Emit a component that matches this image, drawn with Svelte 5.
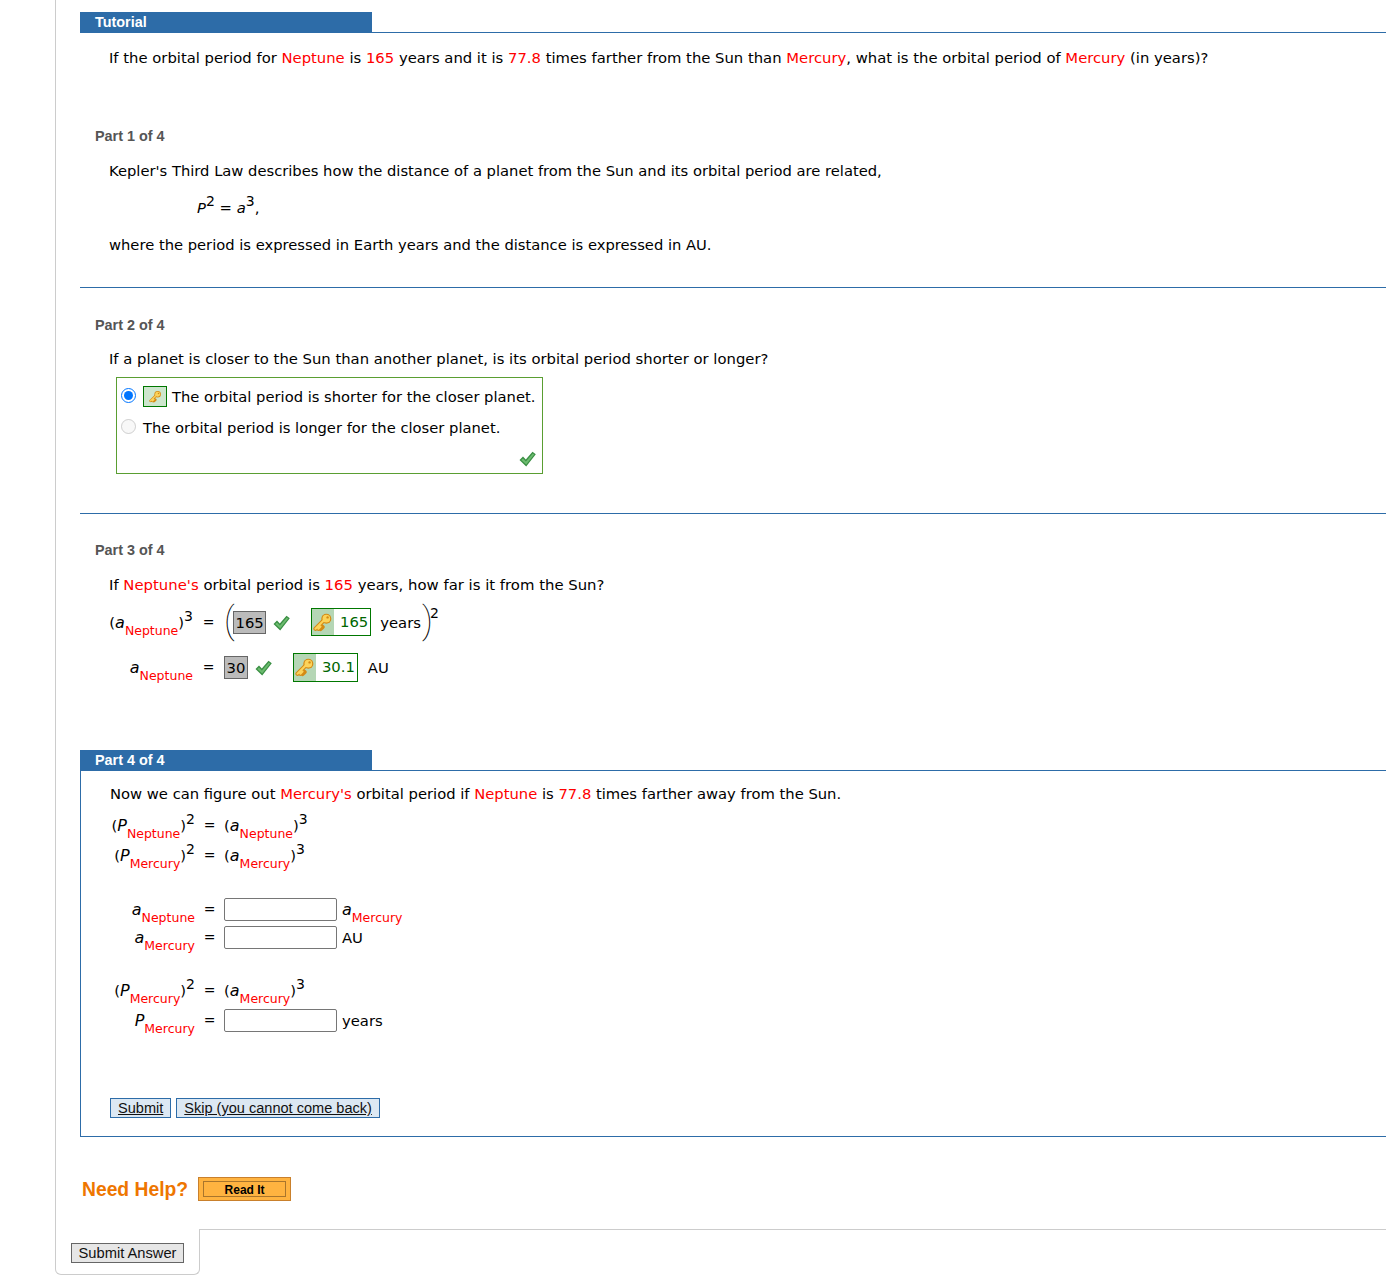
<script lang="ts">
	const intro = [
		['If the orbital period for ', false],
		['Neptune', true],
		[' is ', false],
		['165', true],
		[' years and it is ', false],
		['77.8', true],
		[' times farther from the Sun than ', false],
		['Mercury', true],
		[', what is the orbital period of ', false],
		['Mercury', true],
		[' (in years)?', false]
	];
</script>

{#snippet key()}
	<svg class="key" viewBox="0 0 24 24" aria-hidden="true">
		<path d="M3 20 L14 9 M6.5 20 L9 17.5 M9 20.5 L11.5 18" fill="none" stroke="#d48a14" stroke-width="5" stroke-linecap="round" />
		<circle cx="16" cy="8" r="6" fill="#d48a14" />
		<path d="M3 20 L14 9 M6.5 20 L9 17.5" fill="none" stroke="#fbd35a" stroke-width="2.6" stroke-linecap="round" />
		<circle cx="16" cy="8" r="4.6" fill="#fbd35a" />
		<circle cx="17.5" cy="6.5" r="1.4" fill="#d48a14" />
	</svg>
{/snippet}

{#snippet check()}
	<svg class="check" viewBox="0 0 17 16" aria-hidden="true">
		<path d="M0.5 9 L4 5.5 L6.8 8.5 L13.5 0.8 L16.8 3.2 L7.2 15.5 Z" fill="#3a8f44" />
		<path d="M2.2 9 L4 7.4 L6.9 10.6 L13.8 2.4 L15.2 3.4 L7.2 13.6 Z" fill="#6cbb6f" />
	</svg>
{/snippet}

{#snippet sym(letter, name)}
	<span class="expr"><i class="var">{letter}</i><span class="low">{name}</span></span>
{/snippet}

{#snippet power(letter, name, exp)}
	<span class="expr">(<i class="var">{letter}</i><span class="low">{name}</span>)<sup class="exp">{exp}</sup></span>
{/snippet}

<div class="frame">
	<div class="content">
		<div class="tab-head"><span class="tab">Tutorial</span></div>
		<p class="text intro">
			{#each intro as [str, red]}
				{#if red}<span class="red">{str}</span>{:else}{str}{/if}
			{/each}
		</p>

		<h3 class="part first">Part 1 of 4</h3>
		<p class="text kepler narrow">Kepler's Third Law describes how the distance of a planet from the Sun and its orbital period are related,</p>
		<p class="formula"><i class="var small-var">P</i><sup class="exp">2</sup> = <i class="var small-var">a</i><sup class="exp">3</sup>,</p>
		<p class="text where narrow">where the period is expressed in Earth years and the distance is expressed in AU.</p>
		<hr class="rule one" />

		<h3 class="part">Part 2 of 4</h3>
		<p class="text kepler">If a planet is closer to the Sun than another planet, is its orbital period shorter or longer?</p>
		<div class="choices narrow">
			<label class="choice">
				<input type="radio" name="closer" checked />
				<span class="keybox small">{@render key()}</span>
				<span>The orbital period is shorter for the closer planet.</span>
			</label>
			<label class="choice second">
				<input type="radio" name="closer" disabled />
				<span>The orbital period is longer for the closer planet.</span>
			</label>
			<div class="choice-check">{@render check()}</div>
		</div>
		<hr class="rule two" />

		<h3 class="part tight">Part 3 of 4</h3>
		<p class="text neptune">If <span class="red">Neptune's</span> orbital period is <span class="red">165</span> years, how far is it from the Sun?</p>
		<div class="eq eq-three">
			<div class="lhs">{@render power('a', 'Neptune', 3)}</div>
			<div class="equals">=</div>
			<div class="rhs">
				<span class="big">(</span>
				<span class="answer">165</span>
				{@render check()}
				<span class="keybox wide">
					<span class="keypart">{@render key()}</span>
					<span class="keyval">165</span>
				</span>
				<span class="unit">years</span>
				<span class="big close">)</span>
				<sup class="exp outer">2</sup>
			</div>
			<div class="lhs">{@render sym('a', 'Neptune')}</div>
			<div class="equals">=</div>
			<div class="rhs">
				<span class="answer">30</span>
				{@render check()}
				<span class="keybox wider">
					<span class="keypart">{@render key()}</span>
					<span class="keyval">30.1</span>
				</span>
				<span class="unit au">AU</span>
			</div>
		</div>

		<div class="tab-head current"><span class="tab">Part 4 of 4</span></div>
		<div class="panel">
			<p class="lead">Now we can figure out <span class="red">Mercury's</span> orbital period if <span class="red">Neptune</span> is <span class="red">77.8</span> times farther away from the Sun.</p>
			<div class="eq eq-four">
				<div class="lhs">{@render power('P', 'Neptune', 2)}</div>
				<div class="equals">=</div>
				<div class="rhs">{@render power('a', 'Neptune', 3)}</div>

				<div class="lhs">{@render power('P', 'Mercury', 2)}</div>
				<div class="equals">=</div>
				<div class="rhs">{@render power('a', 'Mercury', 3)}</div>
			</div>
			<div class="eq eq-four inputs">
				<div class="lhs">{@render sym('a', 'Neptune')}</div>
				<div class="equals">=</div>
				<div class="rhs"><input class="field" type="text" /><span class="after">{@render sym('a', 'Mercury')}</span></div>

				<div class="lhs">{@render sym('a', 'Mercury')}</div>
				<div class="equals">=</div>
				<div class="rhs"><input class="field" type="text" /><span class="after">AU</span></div>
			</div>
			<div class="eq eq-four last">
				<div class="lhs">{@render power('P', 'Mercury', 2)}</div>
				<div class="equals">=</div>
				<div class="rhs">{@render power('a', 'Mercury', 3)}</div>

				<div class="lhs">{@render sym('P', 'Mercury')}</div>
				<div class="equals">=</div>
				<div class="rhs"><input class="field" type="text" /><span class="after">years</span></div>
			</div>
			<div class="actions">
				<button class="blue">Submit</button>
				<button class="blue">Skip (you cannot come back)</button>
			</div>
		</div>

		<div class="help">
			<span class="need">Need Help?</span>
			<button class="read"><span>Read It</span></button>
		</div>
	</div>

	<div class="footer">
		<div class="foot-tab"><button class="grey">Submit Answer</button></div>
		<div class="foot-rest"></div>
	</div>
</div>

<style>
	:global(body) {
		margin: 0;
		background: #fff;
		color: #000;
		font-family: "DejaVu Sans", Verdana, sans-serif;
		font-size: 14.8px;
	}

	.frame {
		padding-left: 55px;
		padding-bottom: 12px;
	}

	.content {
		border-left: 1px solid #ccc;
		padding: 12px 0 28px 24px;
	}

	.tab-head {
		border-bottom: 1px solid #2d6ca8;
		height: 20px;
	}

	.tab {
		display: block;
		width: 277px;
		height: 21px;
		padding-left: 15px;
		background: #2d6ca8;
		color: #fff;
		font: bold 14.4px/21px "Liberation Sans", Arial, sans-serif;
	}

	.text,
	.formula {
		margin: 0;
		padding-left: 29px;
		line-height: 20px;
		white-space: nowrap;
	}

	.narrow {
		font-size: 14.72px;
	}

	.intro {
		margin-top: 15px;
	}

	.part {
		margin: 27px 0 0;
		padding-left: 15px;
		color: #555;
		font: bold 14.4px/20px "Liberation Sans", Arial, sans-serif;
	}

	.part.first {
		margin-top: 58px;
	}

	.part.tight {
		margin-top: 26px;
	}

	.kepler {
		margin-top: 14px;
	}

	.part.first + .kepler {
		margin-top: 15px;
	}

	.formula {
		margin-top: 17px;
		padding-left: 117px;
	}

	.where {
		margin-top: 17px;
	}

	.rule {
		margin: 32px 0 0;
		border: 0;
		border-top: 1px solid #2d6ca8;
	}

	.rule.two {
		margin-top: 39px;
	}

	.red {
		color: #f00;
	}

	.expr {
		display: inline-block;
		margin-top: 6px;
		white-space: nowrap;
	}

	.var {
		font-size: 16px;
	}

	.var.small-var {
		font-size: 14.8px;
	}

	.low {
		display: inline-block;
		color: #f00;
		font-size: 12.5px;
		line-height: 1;
		vertical-align: -7px;
	}

	.exp {
		font-size: 14px;
		line-height: 0;
		vertical-align: 7px;
	}

	.choices {
		position: relative;
		box-sizing: border-box;
		width: 427px;
		height: 97px;
		margin: 8px 0 0 36px;
		border: 1px solid #5a9e32;
	}

	.choice {
		display: flex;
		align-items: center;
		height: 22px;
		margin-top: 7px;
		padding-left: 4px;
		white-space: nowrap;
	}

	.choice.second {
		margin-top: 9px;
	}

	.choice input {
		flex: none;
		width: 15px;
		height: 15px;
		margin: 0 7px 2px 0;
	}

	.choice-check {
		position: absolute;
		right: 6px;
		bottom: 6px;
		line-height: 0;
	}

	.keybox {
		box-sizing: border-box;
		display: inline-flex;
		flex: none;
		align-items: stretch;
		border: 1px solid #070;
		background: #fff;
	}

	.keybox.small {
		justify-content: center;
		align-items: center;
		width: 24px;
		height: 21px;
		margin-right: 5px;
		background: #cde6cd;
	}

	.keybox.small .key {
		width: 13px;
		height: 13px;
	}

	.keybox.wide {
		width: 60px;
		height: 28px;
		margin-left: 21px;
	}

	.keybox.wider {
		width: 65px;
		height: 29px;
		margin-left: 21px;
	}

	.keypart {
		display: flex;
		align-items: center;
		justify-content: center;
		width: 22px;
		background: #b5d6b5;
		flex: none;
	}

	.key {
		display: block;
		width: 20px;
		height: 20px;
	}

	.keyval {
		flex: 1;
		padding-right: 2px;
		color: #060;
		line-height: 26px;
		text-align: right;
	}

	.check {
		display: block;
		flex: none;
		width: 17px;
		height: 16px;
		margin-top: 2px;
	}

	.rhs > .check {
		margin-left: 7px;
	}

	.neptune {
		margin-top: 15px;
		font-size: 14.87px;
	}

	.eq {
		display: grid;
		white-space: nowrap;
		justify-content: start;
		align-items: center;
	}

	.lhs {
		text-align: right;
	}

	.equals {
		text-align: center;
		font-size: 14px;
	}

	.eq-three {
		grid-template-columns: 113px 31px auto;
		grid-template-rows: 36px 30px;
		row-gap: 12px;
		margin-top: 9px;
	}

	.rhs {
		display: flex;
		align-items: center;
	}

	.big {
		width: 9px;
		margin-top: -2px;
		font: 100 36px/36px Roboto, sans-serif;
	}

	.big.close {
		width: 7px;
		margin-left: 1px;
	}

	.exp.outer {
		align-self: flex-start;
		margin: 1px 0 0 1px;
		line-height: 14px;
	}

	.answer {
		box-sizing: border-box;
		height: 23px;
		padding: 0 1.5px;
		border: 1px solid #666;
		background: #bbb;
		line-height: 21px;
	}

	.unit {
		margin-left: 9px;
	}

	.unit.au {
		margin-left: 10px;
	}

	.tab-head.current {
		margin-top: 68px;
	}

	.panel {
		padding: 13px 0 18px 29px;
		border-left: 1px solid #2d6ca8;
		border-bottom: 1px solid #2d6ca8;
	}

	.lead {
		margin: 0;
		font-size: 14.76px;
		line-height: 20px;
		white-space: nowrap;
	}

	.eq-four {
		grid-template-columns: 85px 29px auto;
		grid-auto-rows: 30px;
		margin-top: 6px;
	}

	.eq-four.inputs {
		grid-auto-rows: 28px;
		margin-top: 25px;
	}

	.eq-four.last {
		margin-top: 24px;
	}

	.field {
		flex: none;
		box-sizing: border-box;
		width: 113px;
		height: 23px;
		padding: 0 4px;
		border: 1px solid #767676;
		border-radius: 2px;
		background: #fff;
	}

	.after {
		margin-left: 5px;
	}

	.actions {
		display: flex;
		gap: 5px;
		margin-top: 63px;
	}

	button {
		cursor: pointer;
		font-family: "Liberation Sans", Arial, sans-serif;
	}

	.blue {
		height: 20px;
		padding: 0 7px;
		border: 1px solid #2d6ca8;
		background: #dce8f3;
		color: #111;
		font-size: 14.55px;
		line-height: 18px;
		text-decoration: underline;
	}

	.help {
		display: flex;
		align-items: center;
		gap: 10px;
		margin: 40px 0 0 2px;
	}

	.need {
		padding-top: 2px;
		color: #ee7600;
		font: bold 19.3px/22px "Liberation Sans", Arial, sans-serif;
	}

	.read {
		box-sizing: border-box;
		width: 93px;
		height: 24px;
		padding: 3px 4px;
		border: 1px solid #c9802c;
		background: #ffb340;
		font-size: 12px;
		font-weight: bold;
		line-height: 14px;
	}

	.read span {
		display: block;
		height: 100%;
		box-sizing: border-box;
		border: 1px solid #a9752c;
		line-height: 16px;
	}

	.footer {
		display: flex;
	}

	.foot-tab {
		box-sizing: border-box;
		width: 145px;
		height: 46px;
		padding: 14px 0 0 15px;
		border: 1px solid #ccc;
		border-top: 0;
		border-radius: 0 0 6px 6px;
	}

	.foot-rest {
		flex: 1;
		border-top: 1px solid #ccc;
	}

	.grey {
		display: block;
		box-sizing: border-box;
		width: 113px;
		height: 20px;
		padding: 0;
		border: 1px solid #666;
		background: #e6e6e6;
		color: #111;
		font-size: 14.7px;
		line-height: 18px;
	}
</style>
